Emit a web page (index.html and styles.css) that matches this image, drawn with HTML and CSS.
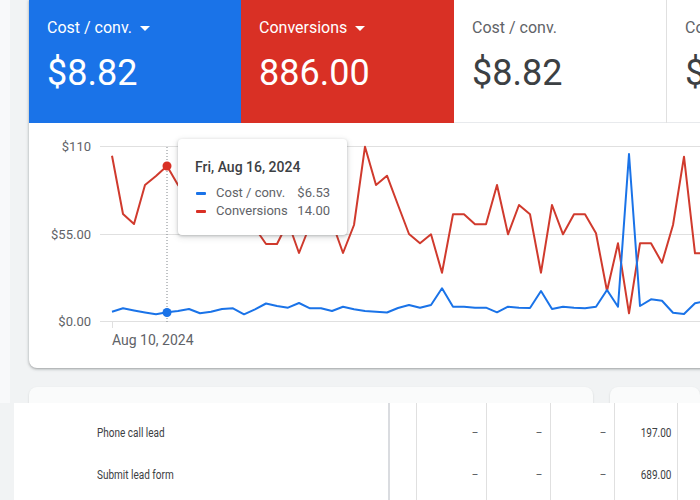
FILE: index.html
```html
<!DOCTYPE html>
<html>
<head>
<meta charset="utf-8">
<link rel="stylesheet" href="styles.css">
</head>
<body>
<div class="top">
  <div class="main-card">
    <div class="tiles">
      <div class="tile blue">
        <div class="label">Cost / conv. <span class="caret"></span></div>
        <div class="value">$8.82</div>
      </div>
      <div class="tile red">
        <div class="label">Conversions <span class="caret"></span></div>
        <div class="value">886.00</div>
      </div>
      <div class="tile white bordered">
        <div class="label">Cost / conv.</div>
        <div class="value">$8.82</div>
      </div>
      <div class="tile white">
        <div class="label">Cost / conv.</div>
        <div class="value">$8.82</div>
      </div>
    </div>
    <div class="chart">
      <svg class="plot" width="671" height="245" viewBox="29 123 671 245">
        <g class="grid">
          <line x1="100" y1="146.5" x2="700" y2="146.5"/>
          <line x1="100" y1="234.5" x2="700" y2="234.5"/>
          <line x1="100" y1="321.5" x2="700" y2="321.5"/>
          <line x1="112.5" y1="322" x2="112.5" y2="328"/>
        </g>
        <g class="axis">
          <text x="91" y="151" text-anchor="end">$110</text>
          <text x="91" y="239" text-anchor="end">$55.00</text>
          <text x="91" y="326" text-anchor="end">$0.00</text>
          <text class="xlab" x="112" y="345">Aug 10, 2024</text>
        </g>
        <line class="cursor" x1="167" y1="147" x2="167" y2="322"/>
        <path class="red-line" d="M112 155.7 L123 214 L134 224 L145 185 L156 176 L167 166 L178 185 L189 200 L200 215 L211 225 L222 205 L233 195 L244 215 L255 228 L266 244 L277 244 L288 222 L299 253 L310 225 L321 205 L332 222 L343 253 L354 225 L365 146.7 L376 185 L387 175.7 L398 205 L409 234 L420 243.3 L431 234.3 L442 272.7 L453 214.3 L464 214.3 L475 224.3 L486 224.3 L497 185 L508 234.3 L519 205 L530 214.3 L541 272.7 L552 205 L563 234.3 L574 214.3 L585 214.3 L596 233.3 L607 291 L618 243.3 L629 313.3 L640 243.3 L651 243.3 L662 262.7 L673 225 L684 156.7 L695 253.3 L706 253.3"/>
        <path class="blue-line" d="M112 311.7 L123 308.3 L134 310.5 L145 312.5 L156 314.3 L167 312.3 L178 311 L189 309 L200 313.3 L211 311.7 L222 309 L233 308.3 L244 314.3 L255 309.3 L266 303.5 L277 306 L288 307.7 L299 303 L310 308.3 L321 308.3 L332 311 L343 306.7 L354 309.3 L365 311 L376 311.7 L387 312.5 L398 308 L409 305 L420 307.7 L431 305 L442 288.3 L453 306.7 L464 306.7 L475 307.7 L486 307.7 L497 312.3 L508 306.7 L519 307.7 L530 308 L541 291 L552 309 L563 306.7 L574 307.7 L585 308.3 L596 306.7 L607 290 L618 306.7 L629 154 L640 306 L651 299.3 L662 300.7 L673 312.7 L684 314 L695 303.3 L706 301"/>
        <circle class="red-dot" cx="167" cy="166" r="4.5"/>
        <circle class="blue-dot" cx="167" cy="312.5" r="4.5"/>
      </svg>
      <div class="tooltip">
        <div class="tt-title">Fri, Aug 16, 2024</div>
        <div class="tt-row"><span class="swatch sw-blue"></span><span class="tt-name">Cost / conv.</span><span class="tt-val">$6.53</span></div>
        <div class="tt-row"><span class="swatch sw-red"></span><span class="tt-name">Conversions</span><span class="tt-val">14.00</span></div>
      </div>
    </div>
  </div>
  <div class="cards-row">
    <div class="mini wide"></div>
    <div class="mini"></div>
  </div>
</div>
<div class="table">
  <div class="row first">
    <div class="cell name"><span class="sq">Phone call lead</span></div>
    <div class="cell c2"></div>
    <div class="cell num w70"><span class="sq r">–</span></div>
    <div class="cell num w64"><span class="sq r">–</span></div>
    <div class="cell num w64"><span class="sq r">–</span></div>
    <div class="cell num w63 last"><span class="sq r">197.00</span></div>
    <div class="cell rest"></div>
  </div>
  <div class="row">
    <div class="cell name"><span class="sq">Submit lead form</span></div>
    <div class="cell c2"></div>
    <div class="cell num w70"><span class="sq r">–</span></div>
    <div class="cell num w64"><span class="sq r">–</span></div>
    <div class="cell num w64"><span class="sq r">–</span></div>
    <div class="cell num w63 last"><span class="sq r">689.00</span></div>
    <div class="cell rest"></div>
  </div>
  <div class="row tail">
    <div class="cell name"></div>
    <div class="cell c2"></div>
    <div class="cell num w70"></div>
    <div class="cell num w64"></div>
    <div class="cell num w64"></div>
    <div class="cell num w63"></div>
    <div class="cell rest"></div>
  </div>
</div>
</body>
</html>
```

FILE: styles.css
```css
html, body {
  margin: 0;
  padding: 0;
}
body {
  width: 700px;
  height: 500px;
  overflow: hidden;
  font-family: Roboto, "Noto Sans", Arial, sans-serif;
  background: #f1f3f4;
}
.top {
  height: 403px;
  box-sizing: border-box;
  background: #f1f3f4;
  border-left: 10px solid #f8f9fa;
  padding-left: 19px;
  overflow: hidden;
}
.main-card {
  width: 700px;
  height: 368px;
  background: #fff;
  border-bottom-left-radius: 8px;
  box-shadow: 0 1px 2px rgba(60, 64, 67, 0.3), 0 1px 3px 1px rgba(60, 64, 67, 0.15);
  overflow: hidden;
}
.tiles {
  display: flex;
  height: 123px;
}
.tile {
  box-sizing: border-box;
  width: 212px;
  padding: 18px 0 0 18px;
  flex-shrink: 0;
}
.tile.red { width: 213px; }
.tile.bordered {
  width: 213px;
  border-right: 1px solid #e0e0e0;
}
.tile.blue { background: #1a73e8; color: #fff; }
.tile.red { background: #d93025; color: #fff; }
.tile.white {
  background: #fff;
  box-shadow: inset 0 -1px 0 #e8eaed;
}
.label {
  font-size: 16px;
  line-height: 20px;
  display: flex;
  align-items: center;
}
.white .label { color: #5f6368; }
.caret {
  width: 0;
  height: 0;
  margin-left: 8px;
  margin-top: 1px;
  border-left: 5px solid transparent;
  border-right: 5px solid transparent;
  border-top: 5px solid #fff;
}
.value {
  font-size: 36px;
  line-height: 42px;
  margin-top: 14px;
}
.white .value { color: #3c4043; }
.chart {
  position: relative;
  height: 245px;
}
.plot {
  display: block;
}
.grid line {
  stroke: #e0e0e0;
  stroke-width: 1;
}
.axis text {
  font-family: Roboto, Arial, sans-serif;
  font-size: 13px;
  fill: #5f6368;
}
.axis .xlab {
  font-size: 14px;
}
.cursor {
  stroke: #80868b;
  stroke-width: 1;
  stroke-dasharray: 1 2;
}
.red-line {
  fill: none;
  stroke: #d03a2d;
  stroke-width: 2;
  stroke-linejoin: round;
}
.blue-line {
  fill: none;
  stroke: #1a73e8;
  stroke-width: 2;
  stroke-linejoin: round;
}
.red-dot { fill: #d93025; }
.blue-dot { fill: #1a73e8; }
.tooltip {
  position: absolute;
  left: 149px;
  top: 16px;
  width: 169px;
  height: 96px;
  box-sizing: border-box;
  padding: 19px 17px 0 17px;
  background: #fff;
  border-radius: 4px;
  box-shadow: 0 1px 3px rgba(60, 64, 67, 0.3), 0 2px 6px 1px rgba(60, 64, 67, 0.12);
}
.tt-title {
  font-size: 14px;
  font-weight: 500;
  color: #3c4043;
  line-height: 18px;
  margin-bottom: 8px;
}
.tt-row {
  display: flex;
  align-items: center;
  font-size: 13px;
  line-height: 18px;
  color: #5f6368;
}
.swatch {
  width: 10px;
  height: 3px;
  border-radius: 1px;
  margin-left: 1px;
  margin-right: 10px;
}
.sw-blue { background: #1a73e8; }
.sw-red { background: #d93025; }
.tt-name { flex: 1; }
.tt-val { text-align: right; }
.cards-row {
  display: flex;
  gap: 17px;
  margin-top: 19px;
}
.mini {
  height: 40px;
  flex: 1;
  background: #fafbfb;
  border-radius: 8px;
  box-shadow: 0 1px 2px rgba(60, 64, 67, 0.2);
}
.mini.wide {
  flex: 0 0 564px;
}
.table {
  height: 97px;
  background: #fff;
  border-left: 14px solid #f1f3f4;
  overflow: hidden;
}
.row {
  display: flex;
  height: 42px;
}
.row.first { height: 50px; }
.row.tail { height: 10px; }
.cell {
  box-sizing: border-box;
  display: flex;
  align-items: center;
  flex-shrink: 0;
  font-size: 12.5px;
  color: #3c4043;
}
.row.first .cell { padding-top: 8px; }
.cell.name {
  width: 376px;
  padding-left: 83px;
  border-right: 2px solid #dadce0;
}
.cell.c2 { width: 27px; border-right: 1px solid #e0e0e0; }
.cell.num {
  justify-content: flex-end;
  padding-right: 8px;
  border-right: 1px solid #e0e0e0;
  color: #5f6368;
}
.cell.num.last { padding-right: 6px; color: #3c4043; }
.cell.w70 { width: 70px; }
.cell.w64 { width: 64px; }
.cell.w63 { width: 63px; }
.cell.rest { flex: 1; }
.sq {
  display: inline-block;
  white-space: nowrap;
  transform: scaleX(0.8);
  transform-origin: left center;
}
.sq.r {
  transform-origin: right center;
}
```
